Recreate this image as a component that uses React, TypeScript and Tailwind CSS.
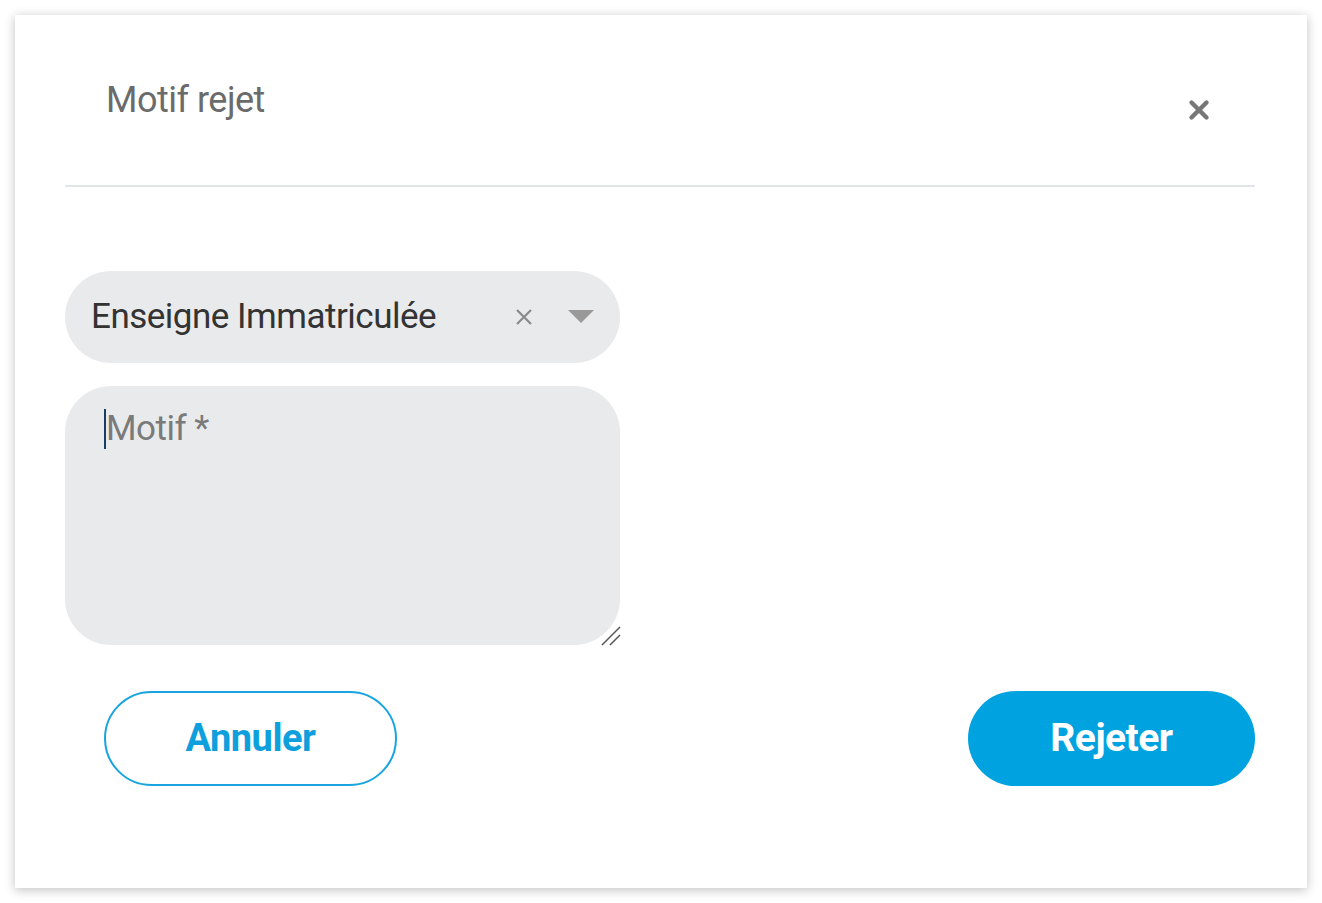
import { X } from 'lucide-react';

const font = { fontFamily: 'Roboto, "Liberation Sans", sans-serif' };

function SelectField() {
  return (
    <div className="flex h-[92px] w-[555px] items-center rounded-full bg-[#e9eaec] pl-[26px] pr-[26px]">
      <span className="flex-1 text-[35px] tracking-[-0.5px] text-[#333]">Enseigne Immatriculée</span>
      <svg width="18" height="18" viewBox="0 0 18 18" className="mr-[35px]">
        <path d="M2 2L16 16M16 2L2 16" stroke="#8a8a8a" strokeWidth="2.2" />
      </svg>
      <svg width="26" height="14" viewBox="0 0 26 14">
        <path d="M0 0H26L13 13Z" fill="#999" />
      </svg>
    </div>
  );
}

function MotifArea() {
  return (
    <div className="relative h-[259px] w-[555px] rounded-[46px] bg-[#e9eaec] pl-[39px] pt-[17px]">
      <div className="flex items-center">
        <span className="h-[40px] w-[2px] bg-[#1a3d66]" />
        <span className="text-[35px] tracking-[-0.5px] text-[#7a7a7a]">Motif *</span>
      </div>
      <svg width="24" height="24" viewBox="0 0 24 24" className="absolute bottom-[-2px] right-[-2px]">
        <path d="M4 22L22 4M12 22L22 12" stroke="#555" strokeWidth="1.5" />
      </svg>
    </div>
  );
}

export default function App() {
  return (
    <div className="h-[903px] w-full bg-white p-[15px]" style={font}>
      <div className="flex h-[873px] w-[1292px] flex-col bg-white px-[50px] shadow-[0_2px_10px_rgba(0,0,0,0.25)]">
        {/* Header */}
        <div className="mr-[2px] flex h-[172px] items-start justify-between border-b-2 border-[#e1e5ea] pl-[41px] pr-[41px]">
          <h1 className="mt-[58px] text-[36px] tracking-[-0.5px] text-[#6b6b6b]">Motif rejet</h1>
          <button className="mt-[80px] text-[#777]">
            <X size={30} strokeWidth={3.5} />
          </button>
        </div>

        {/* Body */}
        <div className="mt-[84px] flex flex-col gap-[23px]">
          <SelectField />
          <MotifArea />
        </div>

        {/* Footer */}
        <div className="mt-[46px] flex items-center justify-between pl-[39px] pr-[2px]">
          <button className="h-[95px] w-[293px] rounded-full border-2 border-[#18a4df] text-[38px] font-bold tracking-[-0.5px] text-[#0ea0dc]">
            Annuler
          </button>
          <button className="h-[95px] w-[287px] rounded-full bg-[#00a3e0] text-[39px] font-bold tracking-[-0.5px] text-white">
            Rejeter
          </button>
        </div>
      </div>
    </div>
  );
}
